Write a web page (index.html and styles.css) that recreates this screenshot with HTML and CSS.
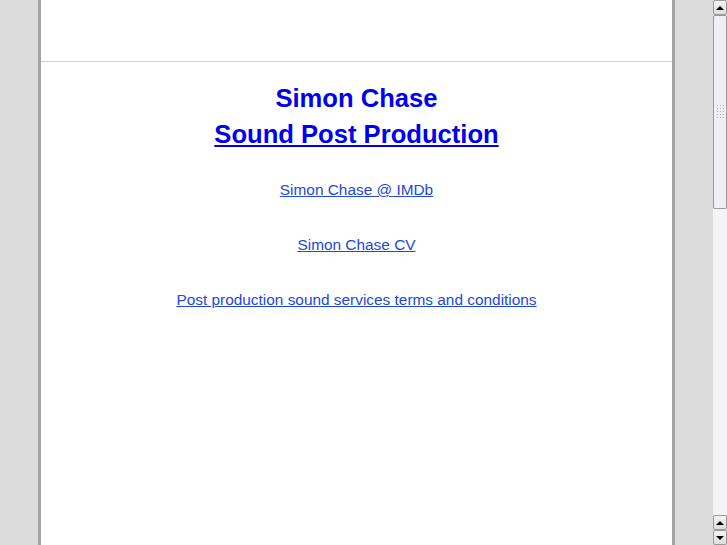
FILE: index.html
```html
<!DOCTYPE html>
<html lang="en">
<head>
  <meta charset="UTF-8" />
  <title>Simon Chase - Sound Post Production</title>
  <link rel="stylesheet" href="styles.css">
</head>
<body>
  <div class="page">
    <div class="column">
      <div class="banner"></div>
      <div class="content">
        <h1 class="name">Simon Chase</h1>
        <h2 class="company"><a href="#">Sound Post Production</a></h2>
        <p class="link-row"><a href="#">Simon Chase @ IMDb</a></p>
        <p class="link-row"><a href="#">Simon Chase CV</a></p>
        <p class="link-row"><a href="#">Post production sound services terms and conditions</a></p>
      </div>
    </div>
  </div>

  <!-- window scrollbar -->
  <div class="scrollbar">
    <div class="sb-btn up"></div>
    <div class="sb-thumb"><span class="grip"></span></div>
    <div class="sb-trough"></div>
    <div class="sb-btn up"></div>
    <div class="sb-btn down"></div>
  </div>
</body>
</html>
```

FILE: styles.css
```css
* {
  margin: 0;
  padding: 0;
  box-sizing: border-box;
}
html, body {
  height: 100%;
}
body {
  display: flex;
  background: #dcdcdc;
  font-family: "Liberation Sans", Arial, sans-serif;
  overflow: hidden;
}

/* Centered white column */
.page {
  flex: 1;
  display: flex;
  justify-content: center;
}
.column {
  width: 637px;
  background: #fff;
  border-left: 3px solid #a4a4a4;
  border-right: 3px solid #a4a4a4;
}
.banner {
  height: 62px;
  border-bottom: 1px solid #cfcfcf;
}
.content {
  text-align: center;
  padding-top: 18px;
}
.name,
.company {
  font-size: 25.6px;
  font-weight: bold;
  line-height: 36px;
  color: #0000f0;
}
.company a {
  color: #0000f0;
}
.company {
  margin-bottom: 29px;
}
.link-row {
  font-size: 15.4px;
  line-height: 18px;
  margin-bottom: 37px;
}
.link-row a {
  color: #2247e0;
}

/* Scrollbar */
.scrollbar {
  width: 14px;
  display: flex;
  flex-direction: column;
  background: #dcdcdc;
}
.sb-btn {
  height: 15px;
  border: 1px solid #9a9a9a;
  border-radius: 2px;
  background: linear-gradient(#f4f4f4, #dedede);
  display: flex;
  align-items: center;
  justify-content: center;
}
.sb-btn::after {
  content: '';
  width: 0;
  height: 0;
  border-left: 4px solid transparent;
  border-right: 4px solid transparent;
}
.sb-btn.up::after {
  border-bottom: 4px solid #000;
}
.sb-btn.down::after {
  border-top: 4px solid #000;
}
.sb-thumb {
  height: 194px;
  border: 1px solid #9a9a9a;
  border-radius: 2px;
  background: #eef0f4;
  display: flex;
  align-items: center;
  justify-content: center;
}
.grip {
  width: 8px;
  height: 16px;
  background: radial-gradient(circle, #b0b0b0 0.6px, transparent 1px) 0 0 / 3px 3px;
}
.sb-trough {
  flex: 1;
  background: #f4f4f6;
}
```
